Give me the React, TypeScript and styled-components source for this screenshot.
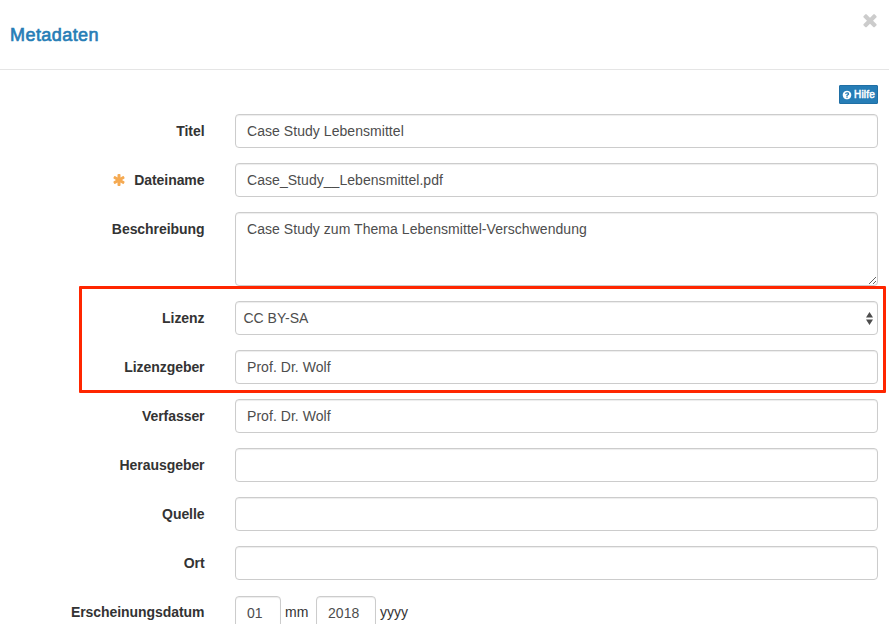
import React from "react";
import styled, { createGlobalStyle } from "styled-components";

const GlobalStyle = createGlobalStyle`
  *, *::before, *::after { box-sizing: border-box; }
  html, body { margin: 0; height: 100%; overflow: hidden; background: #fff; }
  body, input, textarea, button {
    font-family: "Liberation Sans", Arial, sans-serif;
    font-size: 14px;
    line-height: 20px;
  }
`;

const Dialog = styled.div`
  height: 624px;
  overflow: hidden;
  color: #333;
  background: #fff;
`;

const Header = styled.header`
  display: flex;
  justify-content: space-between;
  height: 70px;
  padding: 0 9px 0 10px;
  border-bottom: 1px solid #e5e5e5;
`;

const Title = styled.h4`
  margin: 25px 0 0;
  font-size: 18px;
  line-height: 20px;
  font-weight: 400;
  letter-spacing: 0.44px;
  color: #267db6;
  -webkit-text-stroke: 0.65px #267db6;
`;

const CloseButton = styled.button`
  display: flex;
  align-self: flex-start;
  margin: 10px 0 0;
  padding: 0;
  border: 0;
  background: none;
  color: #ccc;
`;

const Toolbar = styled.div`
  display: flex;
  justify-content: flex-end;
  padding: 15px 11px 10px;
`;

const HelpButton = styled.button`
  display: flex;
  align-items: center;
  justify-content: center;
  gap: 2px;
  width: 39px;
  height: 19px;
  padding: 0;
  border: 1px solid #1f6fa5;
  border-radius: 1px;
  background: #267db6;
  color: #fff;
  font-size: 10px;
  line-height: 15px;
  letter-spacing: 0.15px;
  -webkit-text-stroke: 0.5px #fff;
`;

const Form = styled.form`
  display: grid;
  row-gap: 15px;
  padding-right: 11px;
`;

const Row = styled.div`
  display: grid;
  grid-template-columns: 204.5px 643px;
  column-gap: 30.5px;
`;

const Label = styled.label`
  display: flex;
  justify-content: flex-end;
  align-items: center;
  height: 34px;
  gap: 8px;
  font-weight: 700;
  letter-spacing: -0.06px;
  white-space: nowrap;
`;

const Input = styled.input<{ $width?: number }>`
  display: block;
  width: ${(p) => (p.$width ? `${p.$width}px` : "100%")};
  height: 34px;
  padding: 6px 11px;
  border: 1px solid #ccc;
  border-radius: 4px;
  background: #fff;
  box-shadow: inset 0 1px 1px rgba(0, 0, 0, 0.075);
  color: #4d4d4d;
  letter-spacing: 0.05px;
  outline: 0;
`;

const TextArea = styled.textarea`
  display: block;
  width: 100%;
  height: 74px;
  padding: 6px 11px;
  border: 1px solid #ccc;
  border-radius: 4px;
  box-shadow: inset 0 1px 1px rgba(0, 0, 0, 0.075);
  color: #4d4d4d;
  letter-spacing: 0.05px;
  resize: vertical;
  outline: 0;
`;

const Select = styled.div`
  display: flex;
  align-items: center;
  justify-content: space-between;
  height: 34px;
  padding: 0 4px 0 7.5px;
  border: 1px solid #ccc;
  border-radius: 4px;
  box-shadow: inset 0 1px 1px rgba(0, 0, 0, 0.075);
  color: #4d4d4d;
`;

const Highlight = styled.div`
  position: relative;
  display: grid;
  row-gap: 15px;

  &::after {
    content: "";
    position: absolute;
    top: -15px;
    bottom: -9px;
    left: 79px;
    right: -8px;
    border: 3px solid #ff2600;
    border-radius: 1px;
    pointer-events: none;
  }
`;

const DateFields = styled.div`
  display: flex;
  gap: 4px;
  padding-top: 1px;
`;

const Unit = styled.span<{ $width: number }>`
  width: ${(p) => p.$width}px;
  line-height: 32px;
`;

const CloseIcon = () => (
  <svg width="20" height="20" viewBox="0 0 1792 1792" fill="currentColor">
    <path d="M1490 1322q0 40-28 68l-136 136q-28 28-68 28t-68-28l-294-294-294 294q-28 28-68 28t-68-28l-136-136q-28-28-28-68t28-68l294-294-294-294q-28-28-28-68t28-68l136-136q28-28 68-28t68 28l294 294 294-294q28-28 68-28t68 28l136 136q28 28 28 68t-28 68l-294 294 294 294q28 28 28 68z" />
  </svg>
);

const HelpIcon = () => (
  <svg width="10" height="10" viewBox="0 0 1792 1792" fill="currentColor">
    <path d="M1024 1376v-192q0-14-9-23t-23-9h-192q-14 0-23 9t-9 23v192q0 14 9 23t23 9h192q14 0 23-9t9-23zm256-672q0-88-55.5-163t-138.5-116-170-41q-243 0-371 213-15 24 8 42l132 100q7 6 19 6 16 0 25-12 53-68 86-92 34-24 86-24 48 0 85.500 26t37.500 59q0 38-20 61t-68 45q-63 28-115.500 86.500t-52.500 125.500v36q0 14 9 23t23 9h192q14 0 23-9t9-23q0-19 21.500-49.500t54.500-49.500q32-18 49-28.500t46-35 44.500-48 28-60.500 12.500-81zm384 192q0 209-103 385.500t-279.500 279.500-385.500 103-385.500-103-279.500-279.500-103-385.500 103-385.500 279.500-279.500 385.500-103 385.500 103 279.500 279.500 103 385.500z" />
  </svg>
);

const RequiredIcon = () => (
  <svg width="14" height="14" viewBox="0 0 1792 1792" fill="#f5aa52">
    <path d="M1546 1050q46 26 59.500 77.500t-12.500 97.500l-64 110q-26 46-77.500 59.500t-97.500-12.500l-266-153v307q0 52-38 90t-90 38h-128q-52 0-90-38t-38-90v-307l-266 153q-46 26-97.500 12.500t-77.500-59.500l-64-110q-26-46-12.500-97.500t59.500-77.500l266-154-266-154q-46-26-59.500-77.500t12.500-97.500l64-110q26-46 77.500-59.500t97.500 12.500l266 153v-307q0-52 38-90t90-38h128q52 0 90 38t38 90v307l266-153q46-26 97.500-12.500t77.500 59.500l64 110q26 46 12.500 97.500t-59.500 77.500l-266 154z" />
  </svg>
);

const SelectArrows = () => (
  <svg width="7" height="13" viewBox="0 0 7 13" fill="#4d4d4d">
    <path d="M3.500 0L7 5.500H0ZM0 7.500H7L3.500 13Z" />
  </svg>
);

type FieldProps = {
  label: string;
  value?: string;
  required?: boolean;
};

const Field = ({ label, value = "", required }: FieldProps) => (
  <Row>
    <Label>
      {required && <RequiredIcon />}
      {label}
    </Label>
    <Input defaultValue={value} />
  </Row>
);

export default function App() {
  return (
    <>
      <GlobalStyle />
      <Dialog>
        <Header>
          <Title>Metadaten</Title>
          <CloseButton type="button" aria-label="Schließen">
            <CloseIcon />
          </CloseButton>
        </Header>
        <Toolbar>
          <HelpButton type="button">
            <HelpIcon />
            Hilfe
          </HelpButton>
        </Toolbar>
        <Form>
          <Field label="Titel" value="Case Study Lebensmittel" />
          <Field label="Dateiname" value="Case_Study__Lebensmittel.pdf" required />
          <Row>
            <Label>Beschreibung</Label>
            <TextArea defaultValue="Case Study zum Thema Lebensmittel-Verschwendung" />
          </Row>
          <Highlight>
            <Row>
              <Label>Lizenz</Label>
              <Select>
                CC BY-SA
                <SelectArrows />
              </Select>
            </Row>
            <Field label="Lizenzgeber" value="Prof. Dr. Wolf" />
          </Highlight>
          <Field label="Verfasser" value="Prof. Dr. Wolf" />
          <Field label="Herausgeber" />
          <Field label="Quelle" />
          <Field label="Ort" />
          <Row>
            <Label>Erscheinungsdatum</Label>
            <DateFields>
              <Input $width={46} defaultValue="01" />
              <Unit $width={27}>mm</Unit>
              <Input $width={60} defaultValue="2018" />
              <Unit $width={30}>yyyy</Unit>
            </DateFields>
          </Row>
        </Form>
      </Dialog>
    </>
  );
}
